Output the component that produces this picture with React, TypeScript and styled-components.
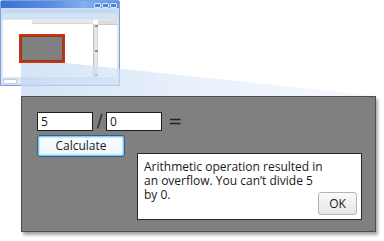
import React from "react";
import styled, { createGlobalStyle } from "styled-components";

const Global = createGlobalStyle`
  html, body { margin: 0; padding: 0; background: #fff; }
  body { font-family: "Open Sans", "Noto Sans", sans-serif; }
`;

const Page = styled.div`
  position: relative;
  width: 384px;
  height: 241px;
  background: #fff;
  overflow: hidden;
  display: flex;
  flex-direction: column;
  align-items: flex-start;
`;

/* ---------- thumbnail window ---------- */
const Win = styled.div`
  width: 120px;
  height: 86px;
  box-sizing: border-box;
  border: 1px solid #7da2d8;
  border-radius: 2px 2px 0 0;
  background: #cfe0f5;
  display: flex;
  flex-direction: column;
  padding: 0 1px 1px 1px;
`;

const TitleBar = styled.div`
  height: 7px;
  margin: 0 -1px;
  background: linear-gradient(90deg, #3d6fd6 0%, #5d8fe6 45%, #7fb0f0 70%, #5f93e4 100%);
  display: flex;
  justify-content: flex-end;
  align-items: center;
  gap: 1px;
  padding-right: 2px;
`;

const TitleBtn = styled.div`
  width: 7px;
  height: 5px;
  margin-top: 2px;
  box-sizing: border-box;
  border: 1px solid #dbe8fb;
  background: #4d82df;
  border-radius: 1px;
`;

const Stripe = styled.div<{ $tone: string }>`
  height: 4px;
  margin-top: 1px;
  background: ${(p) => p.$tone};
`;

const WinBody = styled.div`
  flex: 1;
  margin-top: 1px;
  display: flex;
  background: #fff;
  border: 1px solid #e2e8f0;
  border-radius: 3px 0 0 0;
`;

const MainPane = styled.div`
  flex: 1;
  display: flex;
  flex-direction: column;
`;

const TabStrip = styled.div`
  height: 3px;
  margin-left: 29px;
  background: #e6e8ec;
  border-bottom: 1px solid #d4d8de;
`;

const Canvas = styled.div`
  flex: 1;
  padding: 10px 0 0 16px;
`;

const Selection = styled.div`
  width: 46px;
  height: 29px;
  box-sizing: border-box;
  border: 2px solid #c7340f;
  box-shadow: inset 0 0 0 1px #8a3a26;
  background: #808080;
`;

const ScrollBar = styled.div`
  width: 4px;
  margin-top: 4px;
  background: linear-gradient(90deg, #d6d6d6, #f0f0f0 50%, #cfcfcf);
  border-left: 1px solid #c4c4c4;
  display: flex;
  flex-direction: column;
  justify-content: space-between;
  align-items: center;
  padding: 1px 0;
`;

const ScrollMark = styled.div`
  width: 3px;
  height: 2px;
  background: #8c8c8c;
`;

const SidePane = styled.div`
  width: 19px;
  display: flex;
  flex-direction: column;
`;

const SideHead = styled.div`
  height: 4px;
  background: #dcdfd6;
  border-bottom: 1px solid #c9ccc2;
`;

const StatusBar = styled.div`
  height: 5px;
  margin-top: 1px;
  background: #e4ebf5;
  display: flex;
  gap: 5px;
  padding: 0 1px;
`;

const StatusCell = styled.div<{ $w: number; $tone: string }>`
  width: ${(p) => p.$w}px;
  box-sizing: border-box;
  border: 1px solid #c6cdd8;
  background: ${(p) => p.$tone};
`;

/* ---------- zoom cone ---------- */
const Cone = styled.svg`
  position: absolute;
  left: 0;
  top: 0;
  pointer-events: none;
`;

/* ---------- magnified panel ---------- */
const Panel = styled.div`
  position: relative;
  z-index: 1;
  margin: 10px 0 0 21px;
  width: 355px;
  height: 136px;
  box-sizing: border-box;
  background: #808080;
  border: 1px solid #4e4e4e;
  box-shadow: 2px 3px 3px rgba(0, 0, 0, 0.35);
  padding: 15px 0 0 15px;
  display: flex;
  flex-direction: column;
  align-items: flex-start;
  font-size: 12px;
  color: #1a1a1a;
`;

const Row = styled.div`
  display: flex;
  align-items: center;
`;

const Field = styled.div`
  width: 56px;
  height: 19px;
  box-sizing: border-box;
  border: 1px solid #1e1e1e;
  background: #fff;
  padding-left: 3px;
  line-height: 17px;
`;

const Slash = styled.span`
  width: 13px;
  text-align: center;
  font-family: "DejaVu Sans", sans-serif;
  font-size: 17px;
  line-height: 19px;
  color: #2a2a2a;
`;

const Equals = styled.span`
  margin-left: 6px;
  font-family: "DejaVu Sans", sans-serif;
  font-size: 17px;
  line-height: 19px;
  color: #222;
`;

const CalcButton = styled.div`
  margin-top: 4px;
  width: 88px;
  height: 22px;
  box-sizing: border-box;
  border: 1px solid #2f5f8d;
  border-radius: 3px;
  background: linear-gradient(#fbfdff, #eef7fd);
  box-shadow: inset 0 0 0 1px #7fcaf3, inset 0 0 0 2px #c5e8fb;
  display: flex;
  align-items: center;
  justify-content: center;
  line-height: 1;
`;

const Message = styled.div`
  margin: -4px 0 0 100px;
  width: 225px;
  height: 67px;
  box-sizing: border-box;
  border: 1px solid #2a2a2a;
  background: #fff;
  padding: 6px 4px 4px 6px;
  display: grid;
  grid-template: 1fr / 1fr;
`;

const MessageText = styled.div`
  grid-area: 1 / 1;
  display: flex;
  flex-direction: column;
  align-items: flex-start;
  line-height: 14px;
  white-space: nowrap;
`;

const Line = styled.span`
  display: block;
`;

const OkButton = styled.div`
  grid-area: 1 / 1;
  justify-self: end;
  align-self: end;
  width: 39px;
  height: 23px;
  box-sizing: border-box;
  border: 1px solid #b4b4b4;
  border-radius: 3px;
  background: linear-gradient(#fafafa, #e6e6e6);
  display: flex;
  align-items: center;
  justify-content: center;
`;

export default function App() {
  return (
    <>
      <Global />
      <Page>
        <Win>
          <TitleBar>
            <TitleBtn />
            <TitleBtn />
            <TitleBtn />
          </TitleBar>
          <Stripe $tone="#c4d9f2" />
          <Stripe $tone="#d3e3f6" />
          <WinBody>
            <MainPane>
              <TabStrip />
              <Canvas>
                <Selection />
              </Canvas>
            </MainPane>
            <ScrollBar>
              <ScrollMark />
              <ScrollMark />
              <ScrollMark />
            </ScrollBar>
            <SidePane>
              <SideHead />
            </SidePane>
          </WinBody>
          <StatusBar>
            <StatusCell $w={14} $tone="#fff" />
            <StatusCell $w={24} $tone="#dbe8f8" />
          </StatusBar>
        </Win>

        <Panel>
          <Row>
            <Field>5</Field>
            <Slash>/</Slash>
            <Field>0</Field>
            <Equals>=</Equals>
          </Row>
          <CalcButton>Calculate</CalcButton>
          <Message>
            <MessageText>
              <Line>Arithmetic operation resulted in</Line>
              <Line>an overflow. You can’t divide 5</Line>
              <Line>by 0.</Line>
            </MessageText>
            <OkButton>OK</OkButton>
          </Message>
        </Panel>

        <Cone width={384} height={241} viewBox="0 0 384 241">
          <defs>
            <linearGradient id="cone" x1="0" y1="0" x2="1" y2="0">
              <stop offset="0" stopColor="#c6daf4" stopOpacity="0.75" />
              <stop offset="0.5" stopColor="#dbe7f8" stopOpacity="0.6" />
              <stop offset="1" stopColor="#eef4fc" stopOpacity="0.5" />
            </linearGradient>
          </defs>
          <polygon points="21,63 66,63 378,96 21,96" fill="url(#cone)" />
        </Cone>
      </Page>
    </>
  );
}
